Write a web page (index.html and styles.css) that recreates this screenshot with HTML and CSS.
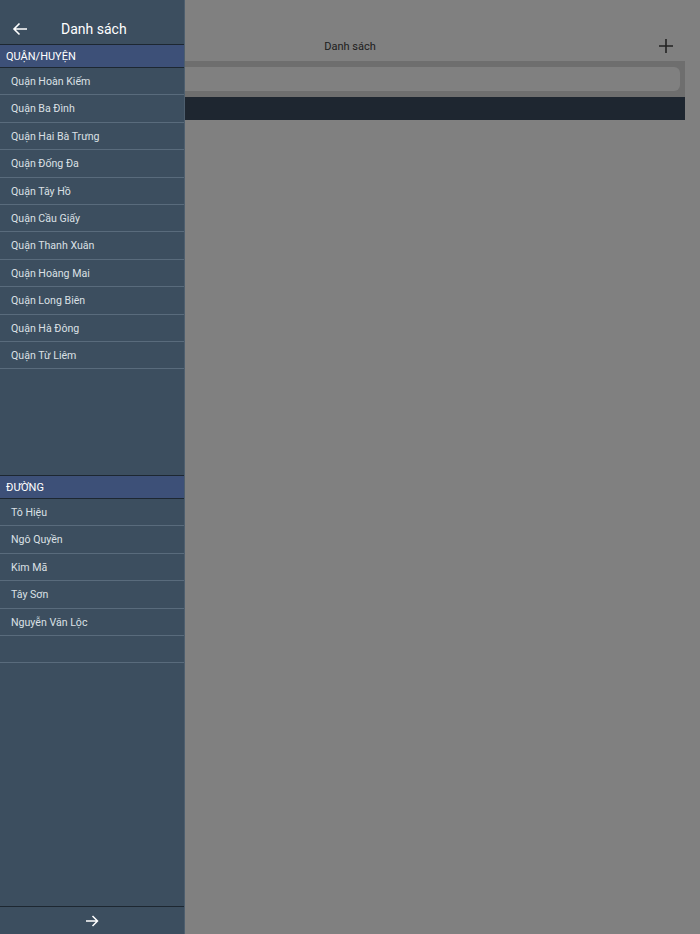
FILE: index.html
```html
<!DOCTYPE html>
<html lang="vi">
<head>
    <meta charset="UTF-8">
    <meta name="viewport" content="width=device-width, initial-scale=1.0">
    <title>Danh sách</title>
    <link rel="stylesheet" href="styles.css">
</head>
<body>

    <div class="main">
        <div class="navbar">
            <span class="nav-title">Danh sách</span>
            <svg class="nav-add" width="16" height="16" viewBox="0 0 16 16">
                <path d="M8 1v14M1 8h14" stroke="#222" stroke-width="1.6" fill="none"/>
            </svg>
        </div>
        <div class="search-bar">
            <div class="search-input"></div>
        </div>
        <div class="dark-band"></div>
    </div>

    <div class="drawer">
        <div class="drawer-header">
            <svg class="back" width="16" height="14" viewBox="0 0 16 14">
                <path d="M15 7H2M7.5 1.5L2 7l5.5 5.5" stroke="#fff" stroke-width="1.6" fill="none"/>
            </svg>
            <span class="drawer-title">Danh sách</span>
        </div>

        <div class="section section-district">
            <div class="section-title">QUẬN/HUYỆN</div>
            <ul class="list">
                <li>Quận Hoàn Kiếm</li>
                <li>Quận Ba Đình</li>
                <li>Quận Hai Bà Trưng</li>
                <li>Quận Đống Đa</li>
                <li>Quận Tây Hồ</li>
                <li>Quận Cầu Giấy</li>
                <li>Quận Thanh Xuân</li>
                <li>Quận Hoàng Mai</li>
                <li>Quận Long Biên</li>
                <li>Quận Hà Đông</li>
                <li>Quận Từ Liêm</li>
            </ul>
        </div>

        <div class="section section-street">
            <div class="section-title">ĐƯỜNG</div>
            <ul class="list">
                <li>Tô Hiệu</li>
                <li>Ngô Quyền</li>
                <li>Kim Mã</li>
                <li>Tây Sơn</li>
                <li>Nguyễn Văn Lộc</li>
                <li></li>
            </ul>
        </div>

        <div class="drawer-footer">
            <svg width="14" height="12" viewBox="0 0 14 12">
                <path d="M1 6h11.5M7.5 1l5 5-5 5" stroke="#fff" stroke-width="1.5" fill="none"/>
            </svg>
        </div>
    </div>

</body>
</html>
```

FILE: styles.css
```css
body {
    margin: 0;
    height: 934px;
    overflow: hidden;
    background-color: #808080;
    font-family: Roboto, "Liberation Sans", sans-serif;
    position: relative;
}

.main {
    width: 700px;
}

.navbar {
    height: 61px;
    display: flex;
    align-items: flex-end;
    justify-content: center;
    position: relative;
}

.nav-title {
    font-size: 11px;
    color: #1c1c1c;
    line-height: 28px;
}

.nav-add {
    position: absolute;
    right: 26px;
    top: 38px;
}

.search-bar {
    width: 685px;
    height: 36px;
    background-color: #6e6e6e;
    box-sizing: border-box;
    padding: 6px 5px 6px 0;
}

.search-input {
    height: 24px;
    background-color: #808080;
    border-radius: 6px;
}

.dark-band {
    width: 685px;
    height: 23px;
    background-color: #1e2630;
}

.drawer {
    position: absolute;
    top: 0;
    left: 0;
    width: 184px;
    height: 934px;
    background-color: #3c4e5f;
    border-right: 1px solid #4d5e6e;
    display: flex;
    flex-direction: column;
}

.drawer-header {
    height: 45px;
    box-sizing: border-box;
    display: flex;
    align-items: center;
    padding: 14px 0 0 12px;
    border-bottom: 1px solid #1d2731;
}

.drawer-title {
    color: #fff;
    font-size: 14px;
    margin-left: 33px;
}

.section-title {
    height: 22px;
    line-height: 23px;
    background-color: #3d5078;
    color: #fff;
    font-size: 11px;
    padding-left: 6px;
    border-bottom: 1px solid #1d2731;
}

.list {
    list-style: none;
    margin: 0;
    padding: 0;
}

.list li {
    height: 26.4px;
    line-height: 28px;
    border-bottom: 1px solid #596b7c;
    color: #dbe0e5;
    font-size: 10.6px;
    padding-left: 11px;
}

.section-district {
    height: 430px;
    border-bottom: 1px solid #1d2731;
}

.section-street {
    flex: 1;
}

.drawer-footer {
    height: 27px;
    border-top: 1px solid #1d2731;
    display: flex;
    align-items: center;
    justify-content: center;
}
```
